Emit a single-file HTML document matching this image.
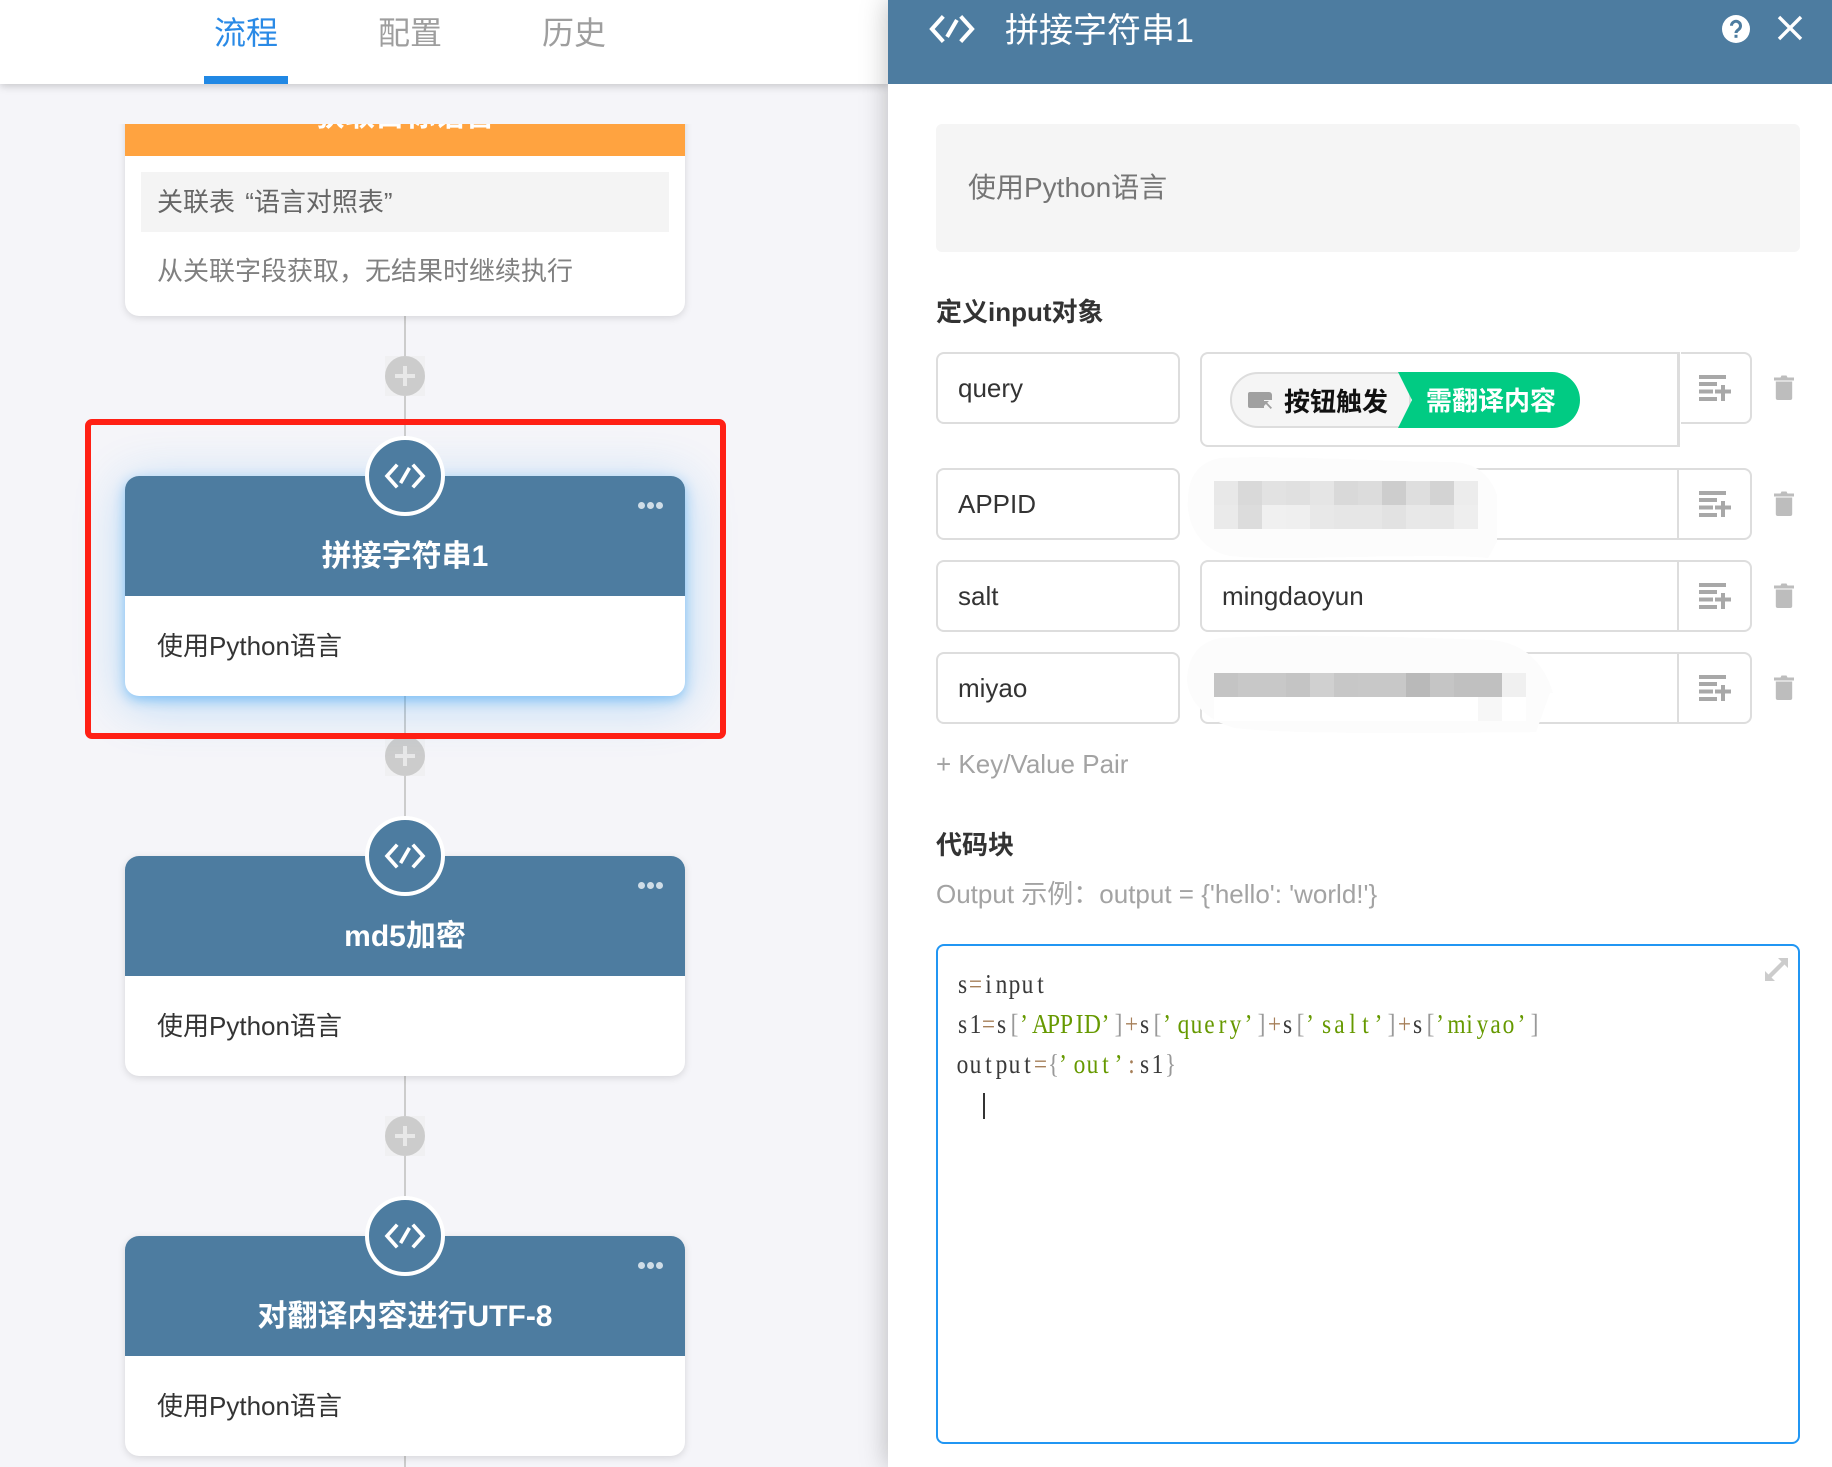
<!DOCTYPE html>
<html lang="zh"><head><meta charset="utf-8"><title>流程</title>
<style>
*{box-sizing:border-box}
html,body{margin:0;padding:0}
body{width:1832px;height:1467px;position:relative;overflow:hidden;background:#f5f5f9;font-family:"Liberation Sans","Noto Sans CJK SC",sans-serif;font-size:26px;color:#333}
.a{position:absolute}
.t{position:absolute;white-space:nowrap;line-height:40px;height:40px}
.tab{position:absolute;top:13px;font-size:32px;line-height:40px;width:120px;text-align:center;color:#9e9e9e;white-space:nowrap}
.vl{position:absolute;left:404px;width:2px;background:#ccc}
.plus{position:absolute;left:385px;width:40px;height:40px;background:#f0f0f2}
.plus i{position:absolute;left:0;top:0;width:40px;height:40px;border-radius:50%;background:#ccc}
.plus i:before{content:"";position:absolute;left:10px;top:18px;width:20px;height:4px;background:#e8e8e8}
.plus i:after{content:"";position:absolute;left:18px;top:10px;width:4px;height:20px;background:#e8e8e8}
.card{position:absolute;left:125px;width:560px;height:220px;background:#fff;border-radius:14px;box-shadow:0 2px 8px rgba(0,0,0,.13)}
.card.sel{box-shadow:0 4px 12px rgba(33,150,243,.45),0 8px 50px rgba(33,150,243,.3)}
.hd{position:absolute;left:0;top:0;width:560px;height:120px;background:#4d7ca0;border-radius:14px 14px 0 0}
.ttl{position:absolute;left:0;top:61px;width:560px;height:40px;line-height:40px;text-align:center;font-size:30px;font-weight:700;color:#fff;white-space:nowrap}
.bd{position:absolute;left:32px;top:150px;height:40px;line-height:40px;color:#333;white-space:nowrap}
.ic{position:absolute;left:240px;top:-40px;width:80px;height:80px;border-radius:50%;background:#4d7ca0;border:4px solid #fff}
.ic svg{position:absolute;left:0;top:0}
.dots{position:absolute;left:513px;top:26px;width:26px;height:7px}
.dots b{position:absolute;top:0;width:7px;height:7px;border-radius:50%;background:#cfdde7}
.key,.val{position:absolute;height:72px;background:#fff;border:2px solid #ddd;white-space:nowrap;line-height:68px;color:#333}
.key{left:936px;width:244px;border-radius:8px;padding-left:20px}
.val{left:1200px;width:479px;border-right:2px solid #ddd;border-radius:8px 0 0 8px;padding-left:20px}
.btn{position:absolute;left:1677px;width:75px;height:72px;background:#fff;border:2px solid #ddd;border-radius:0 8px 8px 0}
.i-l{position:absolute;left:1699px;width:32px;height:26px}
.i-t{position:absolute;left:1774px;width:20px;height:25px}
.sec{position:absolute;left:936px;font-weight:700;color:#333;white-space:nowrap;line-height:40px;height:40px}
</style></head>
<body>

<svg width="0" height="0" style="position:absolute">
<symbol id="code" viewBox="-26 -16 52 32"><g fill="none" stroke="#fff" stroke-width="3.6" stroke-linecap="square" stroke-linejoin="miter"><path d="M-9-10L-18 0-9 10M9-10L18 0 9 10M3.500-6.500L-3.500 5.500"/></g></symbol>
<symbol id="lst" viewBox="0 0 32 26"><g fill="#a8a8a8"><rect x="0" y="0" width="27" height="4"/><rect x="0" y="7" width="18" height="4"/><rect x="0" y="14.500" width="14" height="4"/><rect x="16" y="14.500" width="16" height="4"/><rect x="22" y="10" width="4" height="16"/><rect x="0" y="22" width="18" height="4"/></g></symbol>
<symbol id="trs" viewBox="0 0 20 25"><g fill="#bdbdbd"><path d="M0 2.500h6.500l1-2h5l1 2H20v3H0z"/><path d="M1.800 6.500h16.400v16.500a2 2 0 0 1-2 2H3.800a2 2 0 0 1-2-2z"/></g></symbol>
</svg>

<!-- left flow area, clipped at y=124 -->
<div class="a" style="left:0;top:124px;width:888px;height:1343px;overflow:hidden">
  <div class="a" style="left:0;top:-124px;width:888px;height:1467px">
    <div class="vl" style="top:316px;height:120px"></div>
    <div class="vl" style="top:696px;height:160px"></div>
    <div class="vl" style="top:1076px;height:160px"></div>
    <div class="vl" style="top:1456px;height:11px"></div>
    <div class="plus" style="top:356px"><i></i></div>
    <div class="plus" style="top:736px"><i></i></div>
    <div class="plus" style="top:1116px"><i></i></div>

    <div class="card" style="top:36px;height:280px">
      <div class="hd" style="background:#ffa340"></div>
      <div class="ttl">获取目标语言</div>
      <div class="a" style="left:16px;top:136px;width:528px;height:60px;background:#f4f4f4"></div>
      <div class="t" style="left:32px;top:146px;color:#666">关联表 <span style="margin-left:3px">“语言对照表”</span></div>
      <div class="t" style="left:32px;top:215px;color:#808080">从关联字段获取，无结果时继续执行</div>
    </div>

    <div class="card sel" style="top:476px">
      <div class="hd"></div>
      <div class="ic"><svg width="72" height="72" viewBox="-36 -36 72 72"><use href="#code" x="-26" y="-16" width="52" height="32"/></svg></div>
      <div class="dots"><b style="left:0"></b><b style="left:9px"></b><b style="left:18px"></b></div>
      <div class="ttl">拼接字符串1</div>
      <div class="bd">使用Python语言</div>
    </div>

    <div class="card" style="top:856px">
      <div class="hd"></div>
      <div class="ic"><svg width="72" height="72" viewBox="-36 -36 72 72"><use href="#code" x="-26" y="-16" width="52" height="32"/></svg></div>
      <div class="dots"><b style="left:0"></b><b style="left:9px"></b><b style="left:18px"></b></div>
      <div class="ttl">md5加密</div>
      <div class="bd">使用Python语言</div>
    </div>

    <div class="card" style="top:1236px">
      <div class="hd"></div>
      <div class="ic"><svg width="72" height="72" viewBox="-36 -36 72 72"><use href="#code" x="-26" y="-16" width="52" height="32"/></svg></div>
      <div class="dots"><b style="left:0"></b><b style="left:9px"></b><b style="left:18px"></b></div>
      <div class="ttl">对翻译内容进行UTF-8</div>
      <div class="bd">使用Python语言</div>
    </div>

    <!-- red annotation -->
    <div class="a" style="left:85px;top:419px;width:641px;height:320px;border:6px solid #ff2015;border-radius:7px"></div>
  </div>
</div>

<!-- top tabs -->
<div class="a" style="left:0;top:0;width:888px;height:84px;background:#fff;box-shadow:0 2px 8px rgba(0,0,0,.2)">
  <div class="tab" style="left:186px;color:#2a8ae6">流程</div>
  <div class="tab" style="left:350px">配置</div>
  <div class="tab" style="left:514px">历史</div>
  <div class="a" style="left:204px;top:76px;width:84px;height:8px;background:#2188e4"></div>
</div>

<!-- right panel -->
<div class="a" style="left:888px;top:0;width:944px;height:1467px;background:#fff;box-shadow:0 0 26px rgba(0,0,0,.26)"></div>
<div class="a" style="left:888px;top:0;width:944px;height:84px;background:#4d7ca0"></div>
<svg class="a" style="left:925px;top:11px" width="54" height="36" viewBox="-27 -18 54 36"><use href="#code" x="-29" y="-18" width="58" height="36"/></svg>
<div class="t" style="left:1005px;top:11px;color:#fff;font-size:34px">拼接字符串1</div>
<svg class="a" style="left:1722px;top:15px" width="28" height="28" viewBox="0 0 28 28"><circle cx="14" cy="14" r="14" fill="#fff"/><path d="M9.500 10.800a4.500 4.500 0 1 1 7.300 3.500c-1.500 1.200-2.800 1.900-2.800 3.700" fill="none" stroke="#4d7ca0" stroke-width="3"/><rect x="12.500" y="19.800" width="3" height="3" fill="#4d7ca0"/></svg>
<svg class="a" style="left:1776px;top:15px" width="28" height="26" viewBox="0 0 28 26"><path d="M3 2L25 24M25 2L3 24" stroke="#fff" stroke-width="3.400" fill="none"/></svg>

<div class="a" style="left:936px;top:124px;width:864px;height:128px;background:#f5f5f5;border-radius:6px"></div>
<div class="t" style="left:968px;top:168px;font-size:28px;color:#757575">使用Python语言</div>

<div class="sec" style="top:292px">定义input对象</div>

<!-- row 1 -->
<div class="key" style="top:352px">query</div>
<div class="val" style="top:352px;height:95px"></div>
<div class="btn" style="top:352px"></div>
<div class="a" style="left:1679px;top:352px;width:2px;height:95px;background:#fff"></div>
<div class="a" style="left:1678px;top:352px;width:2px;height:95px;background:#ddd"></div>
<svg class="a" style="left:1230px;top:372px" width="350" height="56" viewBox="0 0 350 56">
  <path d="M28 1H180V55H28A27 27 0 0 1 28 1z" fill="#f5f5f5" stroke="#ddd" stroke-width="2"/>
  <path d="M168 0H322A28 28 0 0 1 322 56H168L182 28z" fill="#01cb83"/>
  <path d="M18 22a2 2 0 0 1 2-2h19a3 3 0 0 1 3 3v5h-8v8H20a2 2 0 0 1-2-2z" fill="#a0a0a0"/>
  <path d="M34 29l5 0-1.800 1.800 4.800 5-1.300 1.200-4.800-5L34 34z" fill="#a0a0a0"/>
</svg>
<div class="t" style="left:1284px;top:382px;font-weight:700;color:#111">按钮触发</div>
<div class="t" style="left:1426px;top:381px;font-weight:700;color:#fff">需翻译内容</div>

<!-- row 2 -->
<div class="key" style="top:468px">APPID</div>
<div class="val" style="top:468px"></div>
<div class="btn" style="top:468px"></div>
<!-- row 3 -->
<div class="key" style="top:560px">salt</div>
<div class="val" style="top:560px">mingdaoyun</div>
<div class="btn" style="top:560px"></div>
<!-- row 4 -->
<div class="key" style="top:652px">miyao</div>
<div class="val" style="top:652px"></div>
<div class="btn" style="top:652px"></div>

<svg class="i-l" style="top:375px"><use href="#lst" width="32" height="26"/></svg>
<svg class="i-l" style="top:491px"><use href="#lst" width="32" height="26"/></svg>
<svg class="i-l" style="top:583px"><use href="#lst" width="32" height="26"/></svg>
<svg class="i-l" style="top:675px"><use href="#lst" width="32" height="26"/></svg>
<svg class="i-t" style="top:375px"><use href="#trs" width="20" height="25"/></svg>
<svg class="i-t" style="top:491px"><use href="#trs" width="20" height="25"/></svg>
<svg class="i-t" style="top:583px"><use href="#trs" width="20" height="25"/></svg>
<svg class="i-t" style="top:675px"><use href="#trs" width="20" height="25"/></svg>

<!-- mosaic masks -->
<svg class="a" style="left:1180px;top:450px" width="380" height="290" viewBox="0 0 380 290">
  <path d="M40 8C110 5 210 12 270 12C300 12 312 30 317 45V92C312 100 312 102 308 108C250 102 100 112 50 106C18 100 6 70 8 50C8 25 20 12 40 8z" fill="#fcfcfc"/>
  <path d="M40 188C120 183 250 188 310 190C345 192 365 215 373 243H370L356 282C270 283 110 285 55 278C25 270 8 250 7 230C8 205 20 192 40 188z" fill="#fcfcfc"/>
  <g shape-rendering="crispEdges">
    <rect x="34" y="31" width="24" height="24" fill="#e8e8e8"/><rect x="58" y="31" width="24" height="24" fill="#d9d9d9"/><rect x="82" y="31" width="24" height="24" fill="#e2e2e2"/><rect x="106" y="31" width="24" height="24" fill="#e0e0e0"/><rect x="130" y="31" width="24" height="24" fill="#e5e5e5"/><rect x="154" y="31" width="24" height="24" fill="#d9d9d9"/><rect x="178" y="31" width="24" height="24" fill="#dcdcdc"/><rect x="202" y="31" width="24" height="24" fill="#cdcdcd"/><rect x="226" y="31" width="24" height="24" fill="#dedede"/><rect x="250" y="31" width="24" height="24" fill="#d3d3d3"/><rect x="274" y="31" width="24" height="24" fill="#ececec"/>
    <rect x="34" y="55" width="24" height="24" fill="#eaeaea"/><rect x="58" y="55" width="24" height="24" fill="#dcdcdc"/><rect x="82" y="55" width="24" height="24" fill="#f0f0f0"/><rect x="106" y="55" width="24" height="24" fill="#efefef"/><rect x="130" y="55" width="24" height="24" fill="#e8e8e8"/><rect x="154" y="55" width="24" height="24" fill="#e6e6e6"/><rect x="178" y="55" width="24" height="24" fill="#e6e6e6"/><rect x="202" y="55" width="24" height="24" fill="#e2e2e2"/><rect x="226" y="55" width="24" height="24" fill="#e8e8e8"/><rect x="250" y="55" width="24" height="24" fill="#e7e7e7"/><rect x="274" y="55" width="24" height="24" fill="#eeeeee"/>
    <rect x="34" y="223" width="24" height="24" fill="#c4c4c4"/><rect x="58" y="223" width="24" height="24" fill="#c8c8c8"/><rect x="82" y="223" width="24" height="24" fill="#c8c8c8"/><rect x="106" y="223" width="24" height="24" fill="#c4c4c4"/><rect x="130" y="223" width="24" height="24" fill="#d0d0d0"/><rect x="154" y="223" width="24" height="24" fill="#c7c7c7"/><rect x="178" y="223" width="24" height="24" fill="#c8c8c8"/><rect x="202" y="223" width="24" height="24" fill="#c8c8c8"/><rect x="226" y="223" width="24" height="24" fill="#b9b9b9"/><rect x="250" y="223" width="24" height="24" fill="#c5c5c5"/><rect x="274" y="223" width="24" height="24" fill="#c0c0c0"/><rect x="298" y="223" width="24" height="24" fill="#c0c0c0"/><rect x="322" y="223" width="24" height="24" fill="#f0f0f0"/>
    <rect x="34" y="247" width="288" height="24" fill="#ffffff"/><rect x="298" y="247" width="24" height="24" fill="#f7f7f7"/><rect x="322" y="247" width="24" height="24" fill="#ffffff"/>
  </g>
</svg>

<div class="t" style="left:936px;top:744px;color:#a3a3a3">+ Key/Value Pair</div>
<div class="sec" style="top:825px">代码块</div>
<div class="t" style="left:936px;top:874px;color:#a3a3a3">Output 示例：output = {'hello': 'world!'}</div>

<!-- code box -->
<div class="a" style="left:936px;top:944px;width:864px;height:500px;border:2px solid #2196f3;border-radius:8px;background:#fff"></div>
<svg class="a" style="left:1764px;top:957px" width="25" height="24" viewBox="0 0 25 24"><g fill="#cccccc"><path d="M14 1H24V11L20.500 7.500 7.500 20.500 11 24H1V14L4.500 17.500 17.500 4.500z"/></g></svg>
<svg class="a" style="left:956px;top:960px" width="640" height="130" viewBox="0 0 640 130" font-family="'Liberation Serif','Noto Serif CJK SC',serif" font-size="27" text-anchor="middle">
<g transform="scale(.8667,1)" fill="#3a3a3a">
<text y="33"><tspan x="7.500">s</tspan><tspan x="22.500" fill="#a67f59">=</tspan><tspan x="37.500 52.500 67.500 82.500 97.500">input</tspan></text>
<text y="73"><tspan x="7.500 22.500">s1</tspan><tspan x="37.500" fill="#a67f59">=</tspan><tspan x="52.500">s</tspan><tspan x="67.500" fill="#999">[</tspan><tspan x="78.500 97.500 112.500 127.500 142.500 157.500 172.500" fill="#690">’APPID’</tspan><tspan x="187.500" fill="#999">]</tspan><tspan x="202.500" fill="#a67f59">+</tspan><tspan x="217.500">s</tspan><tspan x="232.500" fill="#999">[</tspan><tspan x="243.500 262.500 277.500 292.500 307.500 322.500 337.500" fill="#690">’query’</tspan><tspan x="352.500" fill="#999">]</tspan><tspan x="367.500" fill="#a67f59">+</tspan><tspan x="382.500">s</tspan><tspan x="397.500" fill="#999">[</tspan><tspan x="408.500 427.500 442.500 457.500 472.500 487.500" fill="#690">’salt’</tspan><tspan x="502.500" fill="#999">]</tspan><tspan x="517.500" fill="#a67f59">+</tspan><tspan x="532.500">s</tspan><tspan x="547.500" fill="#999">[</tspan><tspan x="558.500 577.500 592.500 607.500 622.500 637.500 652.500" fill="#690">’miyao’</tspan><tspan x="667.500" fill="#999">]</tspan></text>
<text y="113"><tspan x="7.500 22.500 37.500 52.500 67.500 82.500">output</tspan><tspan x="97.500" fill="#a67f59">=</tspan><tspan x="112.500" fill="#999">{</tspan><tspan x="123.500 142.500 157.500 172.500 187.500" fill="#690">’out’</tspan><tspan x="202.500" fill="#a67f59">:</tspan><tspan x="217.500 232.500">s1</tspan><tspan x="247.500" fill="#999">}</tspan></text>
</g>
</svg>
<div class="a" style="left:983px;top:1093px;width:2px;height:26px;background:#333"></div>

</body></html>
